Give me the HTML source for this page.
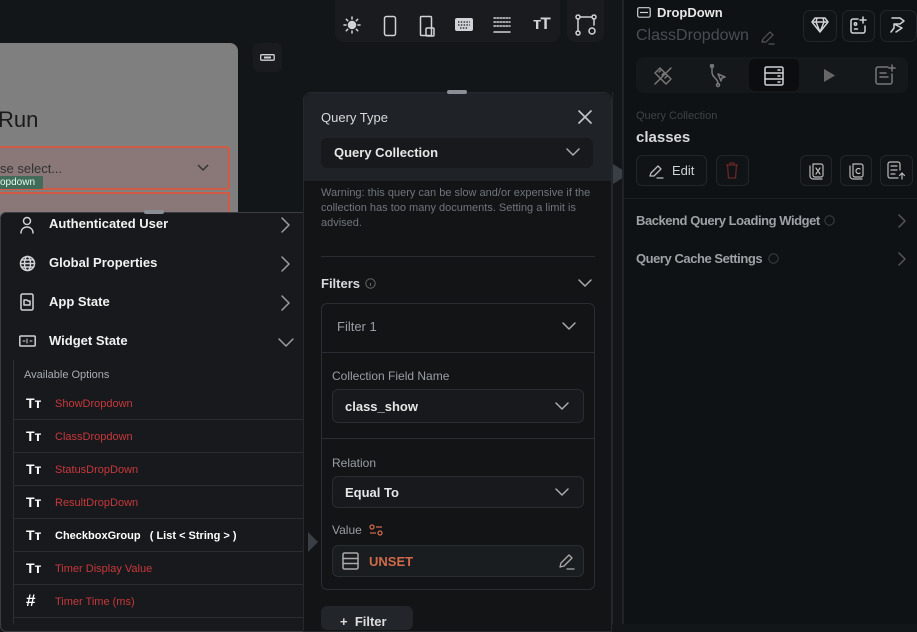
<!DOCTYPE html>
<html><head><meta charset="utf-8"><style>
*{box-sizing:border-box;margin:0;padding:0}
body{width:917px;height:624px;overflow:hidden;background:#131619;font-family:"Liberation Sans",sans-serif;position:relative;color:#e8e8e8}
.a{position:absolute}
.b{font-weight:bold}
svg{display:block}
.ic{stroke:#cfd2d6;fill:none;stroke-width:1.5;stroke-linecap:round;stroke-linejoin:round}
</style></head><body>
<!-- toolbar -->
<div class="a" style="left:335px;top:0;width:225px;height:42px;background:#191b1e;border-radius:0 0 8px 8px"></div>
<div class="a" style="left:567px;top:0;width:37px;height:42px;background:#191b1e;border-radius:0 0 8px 8px"></div>
<svg class="a ic" style="left:343px;top:16px" width="18" height="18" viewBox="0 0 18 18"><circle cx="9" cy="9" r="3.5" fill="#cfd2d6"/><path d="M9 1v2M9 15v2M1 9h2M15 9h2M3.3 3.3l1.4 1.4M13.3 13.3l1.4 1.4M3.3 14.7l1.4-1.4M13.3 4.7l1.4-1.4"/></svg>
<svg class="a ic" style="left:383px;top:15px" width="14" height="22" viewBox="0 0 14 22"><rect x="1.5" y="1.5" width="11" height="19" rx="2"/></svg>
<svg class="a ic" style="left:419px;top:15px" width="18" height="22" viewBox="0 0 18 22"><rect x="1.5" y="1.5" width="11" height="19" rx="1"/><rect x="7" y="13" width="8" height="8" rx="1"/></svg>
<svg class="a" style="left:455px;top:18px" width="18" height="14" viewBox="0 0 18 14"><rect x="0" y="0" width="18" height="13" rx="2" fill="#cfd2d6"/><path d="M3 4h12M3 7h12M5 10h8" stroke="#191b1e" stroke-width="1.3" stroke-dasharray="1.5 1.3"/></svg>
<svg class="a ic" style="left:492px;top:16px" width="20" height="18" viewBox="0 0 20 18"><path d="M2 2h16M2 6h16M2 10h16" stroke-dasharray="1.5 1.5"/><path d="M2 16h16"/></svg>
<div class="a b" style="left:533px;top:14px;font-size:17px;color:#cfd2d6;letter-spacing:-1px">ᴛT</div>
<svg class="a ic" style="left:575px;top:14px" width="22" height="22" viewBox="0 0 22 22"><circle cx="3" cy="3" r="2"/><circle cx="19" cy="3" r="2"/><circle cx="3" cy="19" r="2"/><path d="M5 3h12M3 5v12M19 5v6"/><circle cx="17" cy="17" r="3"/></svg>
<div class="a" style="left:253px;top:43px;width:29px;height:29px;background:#191b1e;border-radius:6px"></div>
<svg class="a" style="left:260px;top:54px" width="15" height="7"><rect x="0.7" y="0.7" width="13.5" height="5.5" rx="1" fill="none" stroke="#cfd2d6" stroke-width="1.3"/><rect x="4" y="2.5" width="7" height="2" fill="#cfd2d6"/></svg>

<!-- canvas card -->
<div class="a" style="left:0;top:43px;width:238px;height:175px;background:#7f7f7f;border-radius:0 8px 0 0"></div>
<div class="a" style="left:-2px;top:107px;font-size:22px;color:#1a1a1a">Run</div>
<div class="a" style="left:-4px;top:146px;width:234px;height:44px;border:2px solid #d25a44;border-radius:4px;background:#8a7777"></div>
<div class="a" style="left:0;top:161px;font-size:13px;color:#333">se select...</div>
<svg class="a" style="left:197px;top:164px" width="12" height="8"><path d="M1 1l5 5 5-5" stroke="#333" stroke-width="1.5" fill="none"/></svg>
<div class="a" style="left:0;top:176px;width:43px;height:13px;background:#436b5a;font-size:10px;color:#dfe;line-height:13px">opdown</div>
<div class="a" style="left:-4px;top:192px;width:234px;height:30px;border:2px solid #d25a44;background:#8a7777"></div>

<!-- left dropdown panel -->
<div class="a" style="left:0;top:212px;width:308px;height:420px;background:#17191c;border:1px solid #3a3d43;border-radius:6px"></div>
<div class="a" style="left:144px;top:210px;width:20px;height:4px;background:#8a8f96;border-radius:2px"></div>
<svg class="a ic" style="left:19px;top:216px" width="16" height="18" viewBox="0 0 16 18"><circle cx="8" cy="5" r="3.5"/><path d="M2 17c0-4 3-6 6-6s6 2 6 6"/></svg>
<div class="a b" style="left:49px;top:216px;font-size:13px;color:#f2f2f2">Authenticated User</div>
<svg class="a ic" style="left:19px;top:255px" width="17" height="17" viewBox="0 0 17 17"><circle cx="8.5" cy="8.5" r="7"/><ellipse cx="8.5" cy="8.5" rx="3" ry="7"/><path d="M1.5 8.5h14M2.5 5h12M2.5 12h12"/></svg>
<div class="a b" style="left:49px;top:255px;font-size:13px;color:#f2f2f2">Global Properties</div>
<svg class="a ic" style="left:20px;top:293px" width="14" height="18" viewBox="0 0 14 18"><rect x="1" y="1" width="12" height="16" rx="1.5"/><path d="M4 7h3l1 1h2v4H4z"/></svg>
<div class="a b" style="left:49px;top:294px;font-size:13px;color:#f2f2f2">App State</div>
<svg class="a ic" style="left:19px;top:335px" width="17" height="12" viewBox="0 0 17 12"><rect x="0.8" y="1" width="15.4" height="10" rx="1"/><path d="M4 6h2M8 4v4M11 6h2" stroke-width="1"/></svg>
<div class="a b" style="left:49px;top:333px;font-size:13px;color:#f2f2f2">Widget State</div>
<svg class="a ic" style="left:280px;top:216px" width="12" height="18"><path d="M2 2l7 7-7 7" stroke="#9a9ea4"/></svg>
<svg class="a ic" style="left:280px;top:255px" width="12" height="18"><path d="M2 2l7 7-7 7" stroke="#9a9ea4"/></svg>
<svg class="a ic" style="left:280px;top:294px" width="12" height="18"><path d="M2 2l7 7-7 7" stroke="#9a9ea4"/></svg>
<svg class="a ic" style="left:277px;top:337px" width="18" height="12"><path d="M2 2l7 7 7-7" stroke="#9a9ea4"/></svg>
<div class="a" style="left:13px;top:360px;width:294px;height:264px;border-left:1px solid #2c2f34"></div>
<div class="a" style="left:24px;top:369px;font-size:11px;color:#a8acb2">Available Options</div>
<div class="a" style="left:13px;top:387px;width:294px">
<div style="height:33px;border-bottom:1px solid #2a2d32;position:relative"><span class="a b" style="left:13px;top:8px;font-size:14px;color:#fff">Tт</span><span class="a" style="left:42px;top:11px;font-size:11px;color:#c8383c">ShowDropdown</span></div>
<div style="height:33px;border-bottom:1px solid #2a2d32;position:relative"><span class="a b" style="left:13px;top:8px;font-size:14px;color:#fff">Tт</span><span class="a" style="left:42px;top:11px;font-size:11px;color:#c8383c">ClassDropdown</span></div>
<div style="height:33px;border-bottom:1px solid #2a2d32;position:relative"><span class="a b" style="left:13px;top:8px;font-size:14px;color:#fff">Tт</span><span class="a" style="left:42px;top:11px;font-size:11px;color:#c8383c">StatusDropDown</span></div>
<div style="height:33px;border-bottom:1px solid #2a2d32;position:relative"><span class="a b" style="left:13px;top:8px;font-size:14px;color:#fff">Tт</span><span class="a" style="left:42px;top:11px;font-size:11px;color:#c8383c">ResultDropDown</span></div>
<div style="height:33px;border-bottom:1px solid #2a2d32;position:relative"><span class="a b" style="left:13px;top:8px;font-size:14px;color:#fff">Tт</span><span class="a b" style="left:42px;top:11px;font-size:11px;color:#fff">CheckboxGroup &nbsp; ( List &lt; String &gt; )</span></div>
<div style="height:33px;border-bottom:1px solid #2a2d32;position:relative"><span class="a b" style="left:13px;top:8px;font-size:14px;color:#fff">Tт</span><span class="a" style="left:42px;top:11px;font-size:11px;color:#c8383c">Timer Display Value</span></div>
<div style="height:33px;border-bottom:1px solid #2a2d32;position:relative"><span class="a b" style="left:13px;top:6px;font-size:17px;color:#fff">#</span><span class="a" style="left:42px;top:11px;font-size:11px;color:#c8383c">Timer Time (ms)</span></div>
</div>

<!-- query panel -->
<div class="a" style="left:303px;top:92px;width:309px;height:540px;background:#121416;border:1px solid #25282c;border-radius:8px 8px 0 0"></div>
<div class="a" style="left:304px;top:93px;width:307px;height:88px;background:#1f2226;border-radius:8px 8px 0 0"></div>
<div class="a" style="left:447px;top:90px;width:20px;height:4px;background:#8a8f96;border-radius:2px"></div>
<div class="a" style="left:321px;top:110px;font-size:13px;color:#d8dadd">Query Type</div>
<svg class="a ic" style="left:578px;top:110px" width="14" height="14"><path d="M1 1l12 12M13 1L1 13" stroke="#c0c3c7" stroke-width="1.7"/></svg>
<div class="a" style="left:321px;top:138px;width:272px;height:30px;background:#17191c;border-radius:6px"></div>
<div class="a b" style="left:334px;top:145px;font-size:13px;color:#e6e6e6">Query Collection</div>
<svg class="a ic" style="left:566px;top:148px" width="14" height="9"><path d="M1 1l6 6 6-6" stroke="#aaa"/></svg>
<div class="a" style="left:321px;top:186px;width:276px;font-size:11px;line-height:15px;color:#71757b">Warning: this query can be slow and/or expensive if the collection has too many documents. Setting a limit is advised.</div>
<div class="a" style="left:321px;top:256px;width:274px;height:1px;background:#2a2d31"></div>
<div class="a b" style="left:321px;top:276px;font-size:13px;color:#d8dadd">Filters</div>
<svg class="a" style="left:365px;top:278px" width="11" height="11"><circle cx="5.5" cy="5.5" r="4.7" fill="none" stroke="#666" /><path d="M5.5 5v3" stroke="#666"/></svg>
<svg class="a ic" style="left:578px;top:279px" width="14" height="9"><path d="M1 1l6 6 6-6" stroke="#aaa"/></svg>
<div class="a" style="left:321px;top:303px;width:274px;height:287px;border:1px solid #2a2d31;border-radius:6px"></div>
<div class="a" style="left:322px;top:352px;width:272px;height:1px;background:#2a2d31"></div>
<div class="a" style="left:322px;top:438px;width:272px;height:1px;background:#2a2d31"></div>
<div class="a" style="left:337px;top:319px;font-size:13px;color:#9a9ea4">Filter 1</div>
<svg class="a ic" style="left:562px;top:322px" width="14" height="9"><path d="M1 1l6 6 6-6" stroke="#aaa"/></svg>
<div class="a" style="left:332px;top:369px;font-size:12px;color:#9a9ea4">Collection Field Name</div>
<div class="a" style="left:332px;top:389px;width:252px;height:34px;background:#17191c;border:1px solid #2a2d31;border-radius:6px"></div>
<div class="a b" style="left:345px;top:399px;font-size:13px;color:#e6e6e6">class_show</div>
<svg class="a ic" style="left:555px;top:402px" width="14" height="9"><path d="M1 1l6 6 6-6" stroke="#aaa"/></svg>
<div class="a" style="left:332px;top:456px;font-size:12px;color:#9a9ea4">Relation</div>
<div class="a" style="left:332px;top:476px;width:252px;height:32px;background:#17191c;border:1px solid #2a2d31;border-radius:6px"></div>
<div class="a b" style="left:345px;top:485px;font-size:13px;color:#e6e6e6">Equal To</div>
<svg class="a ic" style="left:555px;top:488px" width="14" height="9"><path d="M1 1l6 6 6-6" stroke="#aaa"/></svg>
<div class="a" style="left:332px;top:523px;font-size:12px;color:#9a9ea4">Value</div>
<svg class="a" style="left:368px;top:523px" width="16" height="14"><circle cx="4" cy="4" r="2" fill="none" stroke="#d0694a" stroke-width="1.3"/><path d="M8 4h6M2 10h6" stroke="#d0694a" stroke-width="1.3"/><circle cx="12" cy="10" r="2" fill="none" stroke="#d0694a" stroke-width="1.3"/></svg>
<div class="a" style="left:332px;top:545px;width:252px;height:32px;background:#1a1d20;border:1px solid #2a2d31;border-radius:6px"></div>
<svg class="a ic" style="left:342px;top:552px" width="17" height="18"><rect x="1" y="1" width="15" height="16" rx="1.5" stroke="#aaa"/><path d="M1 6.5h15M1 11.5h15" stroke="#aaa"/></svg>
<div class="a b" style="left:369px;top:554px;font-size:13px;color:#d0694a">UNSET</div>
<svg class="a ic" style="left:557px;top:553px" width="18" height="17"><path d="M3 14l1-4 8-8 3 3-8 8z M10 16h7" stroke="#aaa" stroke-width="1.3"/></svg>
<div class="a" style="left:321px;top:606px;width:92px;height:24px;background:#22252a;border-radius:6px"></div>
<div class="a b" style="left:340px;top:614px;font-size:13px;color:#ddd">+ &nbsp;Filter</div>
<!-- pointer triangles -->
<div class="a" style="left:308px;top:532px;width:0;height:0;border-top:10px solid transparent;border-bottom:10px solid transparent;border-left:10px solid #3a3e45"></div>
<div class="a" style="left:612px;top:92px;width:12px;height:532px;background:#131619;border-left:1px solid #23262a"></div>
<div class="a" style="left:613px;top:164px;width:0;height:0;border-top:10px solid transparent;border-bottom:10px solid transparent;border-left:16px solid #3a3e45"></div>

<!-- right panel -->
<div class="a" style="left:624px;top:0;width:293px;height:624px;background:#0f1214"></div>
<div class="a" style="left:622px;top:0;width:2px;height:624px;background:#1f2226"></div>
<svg class="a" style="left:637px;top:7px" width="14" height="11"><rect x="0.7" y="0.7" width="12.5" height="9.5" rx="1.5" fill="none" stroke="#cfd2d6" stroke-width="1.2"/><path d="M3 5.5h8" stroke="#cfd2d6" stroke-width="1.2"/></svg>
<div class="a b" style="left:657px;top:5px;font-size:13px;color:#e6e6e6">DropDown</div>
<div class="a" style="left:636px;top:27px;font-size:16px;color:#4a4e54">ClassDropdown</div>
<svg class="a ic" style="left:760px;top:30px" width="15" height="15"><path d="M2 12l1-3 7-7 3 3-7 7z M9 14h5" stroke="#555" stroke-width="1.2"/></svg>
<div class="a" style="left:803px;top:10px;width:34px;height:32px;border:1px solid #22262a;border-radius:7px;background:#111416"></div>
<div class="a" style="left:842px;top:10px;width:33px;height:32px;border:1px solid #22262a;border-radius:7px;background:#111416"></div>
<div class="a" style="left:880px;top:10px;width:37px;height:32px;border:1px solid #22262a;border-radius:7px;background:#111416"></div>
<svg class="a ic" style="left:811px;top:17px" width="18" height="16"><path d="M4 1h10l3 4-8 10L1 5z M1 5h16M6 1l-1 4 4 10 4-10-1-4"/></svg>
<svg class="a ic" style="left:850px;top:16px" width="17" height="18"><path d="M8 3H3a2 2 0 0 0-2 2v10a2 2 0 0 0 2 2h10a2 2 0 0 0 2-2v-5M13 1v6M10 4h6"/><circle cx="5.5" cy="8" r="1.2"/><path d="M4.5 13h3"/></svg>
<svg class="a ic" style="left:889px;top:16px" width="18" height="18"><path d="M3 2h8l4 3-4 3H5v4l-3 4M5 8l8 4-6 4"/></svg>
<div class="a" style="left:636px;top:57px;width:272px;height:36px;background:#15181b;border-radius:8px"></div>
<div class="a" style="left:749px;top:59px;width:50px;height:32px;background:#0b0d0f;border-radius:6px"></div>
<svg class="a ic" style="left:652px;top:65px" width="22" height="22"><path d="M3 8l5-5 11 11-5 5z M7 7l2-2M10 10l2-2M13 13l2-2M5 17L17 5M3 19l2-2M17 5l2-2" stroke="#777"/></svg>
<svg class="a ic" style="left:708px;top:64px" width="22" height="24"><path d="M4 2v6c0 6 6 6 6 12M10 10l7 3-3 1-1 3z" stroke="#777"/><circle cx="4" cy="2" r="1.5" stroke="#777"/><circle cx="10" cy="21" r="1.5" stroke="#777"/></svg>
<svg class="a ic" style="left:764px;top:66px" width="20" height="20"><rect x="1" y="1" width="18" height="18" rx="1.5"/><path d="M1 7h18M1 13h18M14 4h2M14 10h2M14 16h2"/></svg>
<svg class="a" style="left:824px;top:69px" width="11" height="13"><path d="M0 0l11 6.5L0 13z" fill="#666"/></svg>
<svg class="a ic" style="left:874px;top:64px" width="22" height="22"><path d="M14 3H4a2 2 0 0 0-2 2v13a2 2 0 0 0 2 2h12a2 2 0 0 0 2-2v-8M6 9h6M6 13h8M18 1v6M15 4h6" stroke="#777"/></svg>
<div class="a" style="left:636px;top:110px;font-size:11px;color:#3e4247">Query Collection</div>
<div class="a b" style="left:636px;top:129px;font-size:15px;color:#d6d8db">classes</div>
<div class="a" style="left:636px;top:155px;width:71px;height:31px;border:1px solid #22262a;border-radius:6px;background:#111416"></div>
<svg class="a ic" style="left:648px;top:163px" width="16" height="16"><path d="M2 13l1-3 7-7 3 3-7 7z M9 15h6" stroke="#bbb" stroke-width="1.3"/></svg>
<div class="a" style="left:672px;top:163px;font-size:13px;color:#cfd2d6">Edit</div>
<div class="a" style="left:716px;top:155px;width:33px;height:31px;border:1px solid #22262a;border-radius:6px;background:#111416"></div>
<svg class="a" style="left:725px;top:162px" width="14" height="17"><path d="M1 3h12M5 3V1h4v2M2.5 3l1 13h7l1-13" fill="none" stroke="#6a2626" stroke-width="1.3"/></svg>
<div class="a" style="left:800px;top:155px;width:32px;height:31px;border:1px solid #22262a;border-radius:6px;background:#111416"></div>
<div class="a" style="left:840px;top:155px;width:32px;height:31px;border:1px solid #22262a;border-radius:6px;background:#111416"></div>
<div class="a" style="left:880px;top:155px;width:33px;height:31px;border:1px solid #22262a;border-radius:6px;background:#111416"></div>
<svg class="a ic" style="left:807px;top:162px" width="18" height="18"><path d="M3 4v10a3 3 0 0 0 3 3h9M6 2h8a2 2 0 0 1 2 2v9a2 2 0 0 1-2 2H8a2 2 0 0 1-2-2z M9 6l4 6M13 6l-4 6" stroke="#bbb" stroke-width="1.2"/></svg>
<svg class="a ic" style="left:847px;top:162px" width="18" height="18"><path d="M3 4v10a3 3 0 0 0 3 3h9M6 2h8a2 2 0 0 1 2 2v9a2 2 0 0 1-2 2H8a2 2 0 0 1-2-2z M13 7a2.5 2.5 0 1 0 0 4" stroke="#bbb" stroke-width="1.2"/></svg>
<svg class="a ic" style="left:887px;top:161px" width="18" height="19"><path d="M11 17H3a2 2 0 0 1-2-2V3a2 2 0 0 1 2-2h8a2 2 0 0 1 2 2v6M4 5h6M4 9h6M4 13h4M15 18v-6M12.5 14.5L15 12l2.5 2.5" stroke="#bbb" stroke-width="1.2"/></svg>
<div class="a" style="left:624px;top:198px;width:293px;height:1px;background:#1e2226"></div>
<div class="a b" style="left:636px;top:213px;font-size:13px;color:#9ea2a7;letter-spacing:-0.45px">Backend Query Loading Widget</div>
<svg class="a" style="left:824px;top:215px" width="11" height="11"><circle cx="5.5" cy="5.5" r="4.7" fill="none" stroke="#3c4046"/></svg>
<svg class="a ic" style="left:897px;top:213px" width="10" height="16"><path d="M2 2l6 6-6 6" stroke="#555"/></svg>
<div class="a b" style="left:636px;top:251px;font-size:13px;color:#9ea2a7;letter-spacing:-0.45px">Query Cache Settings</div>
<svg class="a" style="left:768px;top:253px" width="11" height="11"><circle cx="5.5" cy="5.5" r="4.7" fill="none" stroke="#3c4046"/></svg>
<svg class="a ic" style="left:897px;top:251px" width="10" height="16"><path d="M2 2l6 6-6 6" stroke="#555"/></svg>
</body></html>
